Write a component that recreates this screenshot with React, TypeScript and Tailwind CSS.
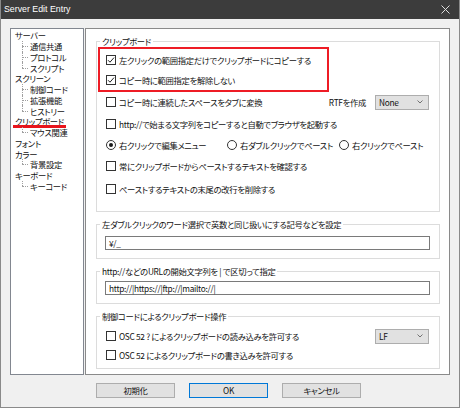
import type { ReactNode } from 'react';

const tree = [
  { label: 'サーバー', children: ['通信共通', 'プロトコル', 'スクリプト'] },
  { label: 'スクリーン', children: ['制御コード', '拡張機能', 'ヒストリー'] },
  { label: 'クリップボード', children: ['マウス関連'], marked: true },
  { label: 'フォント', children: [] },
  { label: 'カラー', children: ['背景設定'] },
  { label: 'キーボード', children: ['キーコード'] },
];

function CheckBox({ checked = false }: { checked?: boolean }) {
  return (
    <span className="flex h-[10px] w-[10px] shrink-0 items-center justify-center border border-[#333] bg-white">
      {checked && (
        <svg width="8" height="8" viewBox="0 0 8 8" fill="none">
          <path d="M1 4.2L3 6.2L7 1.6" stroke="#222" strokeWidth="1" />
        </svg>
      )}
    </span>
  );
}

function Radio({ checked = false }: { checked?: boolean }) {
  return (
    <span className="flex h-[10px] w-[10px] shrink-0 items-center justify-center rounded-full border border-[#333] bg-white">
      {checked && <span className="h-[4px] w-[4px] rounded-full bg-[#1a1a1a]" />}
    </span>
  );
}

function CheckRow({ label, checked, className = '' }: { label: string; checked?: boolean; className?: string }) {
  return (
    <div className={`flex h-[20px] items-center gap-[3px] ${className}`}>
      <CheckBox checked={checked} />
      <span className="whitespace-nowrap">{label}</span>
    </div>
  );
}

function Select({ value }: { value: string }) {
  return (
    <div className="flex h-[15px] w-[54px] items-center justify-between border border-[#adadad] bg-[#e1e1e1] pl-[3px] pr-[5px]">
      <span>{value}</span>
      <svg width="6" height="4" viewBox="0 0 6 4" fill="none">
        <path d="M0.5 0.5L3 3L5.5 0.5" stroke="#555" strokeWidth="0.8" />
      </svg>
    </div>
  );
}

function Group({ title, className = '', children }: { title: string; className?: string; children: ReactNode }) {
  return (
    <div className={`relative border border-[#dcdcdc] ${className}`}>
      <span className="absolute left-[3px] top-[-6px] whitespace-nowrap bg-white px-[2px] leading-[11px]">{title}</span>
      {children}
    </div>
  );
}

function Button({ label, focused = false }: { label: string; focused?: boolean }) {
  return (
    <div
      className={`flex h-[15px] w-[79px] items-center justify-center bg-[#e1e1e1] ${
        focused ? 'border border-[#0078d7]' : 'border border-[#adadad]'
      }`}
    >
      {label}
    </div>
  );
}

export default function App() {
  return (
    <div className="h-[408px] w-[460px] overflow-hidden border-x border-b border-[#8a8a8a] bg-[#f0f0f0] font-['Noto_Sans_CJK_JP','Noto_Sans',sans-serif] text-[8.3px] leading-[11px] tracking-[-0.3px] text-[#111] [font-feature-settings:'palt']">
      <div className="flex h-[19px] items-center justify-between bg-[#3c3c3c] pl-[3px] pr-[9px] tracking-normal text-white">
        <span className="font-['Liberation_Sans',sans-serif] text-[8.8px]">Server Edit Entry</span>
        <svg width="9" height="9" viewBox="0 0 9 9" fill="none">
          <path d="M0.5 0.5L8.5 8.5M8.5 0.5L0.5 8.5" stroke="#ddd" strokeWidth="1" />
        </svg>
      </div>

      <div className="flex gap-[1px] pl-[9px] pt-[9px]">
        <div className="h-[347px] w-[74px] border border-[#828790] bg-white pl-[4px] pt-[1px]">
          {tree.map((node) => (
            <div key={node.label}>
              <div className="flex h-[10.75px] items-center leading-[10px]">
                <span className="relative">
                  {node.label}
                  {node.marked && (
                    <span className="absolute -left-[2px] -right-[2px] bottom-[-2px] h-[3px] bg-[#e8141c]" />
                  )}
                </span>
              </div>
              {node.children.map((child, i) => (
                <div key={child} className="flex h-[10.75px] items-center leading-[10px]">
                  <span className="relative w-[15px] self-stretch">
                    <span
                      className={`absolute left-[7px] top-0 border-l border-dotted border-[#a0a0a0] ${
                        i === node.children.length - 1 ? 'h-1/2' : 'h-full'
                      }`}
                    />
                    <span className="absolute left-[7px] top-1/2 w-[6px] border-t border-dotted border-[#a0a0a0]" />
                  </span>
                  <span>{child}</span>
                </div>
              ))}
            </div>
          ))}
        </div>

        <div className="h-[347px] w-[365px] border border-[#8a8a8a] bg-white pl-[10px] pr-[9px] pt-[12px]">
          <Group title="クリップボード" className="h-[171px]">
            <div className="ml-[1px] mt-[5px] w-[231px] border-2 border-[#ee1c25] pl-[6px] pt-[1px]">
              <CheckRow checked label="左クリックの範囲指定だけでクリップボードにコピーする" />
              <CheckRow checked label="コピー時に範囲指定を解除しない" />
            </div>
            <div className="flex flex-col pl-[9px] pr-[10px]">
              <div className="flex h-[20px] items-center">
                <CheckBox />
                <span className="ml-[3px]">コピー時に連続したスペースをタブに変換</span>
                <span className="ml-auto mr-[9px]">RTFを作成</span>
                <Select value="None" />
              </div>
              <CheckRow className="mt-[2px]" label="http://で始まる文字列をコピーすると自動でブラウザを起動する" />
              <div className="mt-[1px] flex h-[20px] items-center">
                <span className="flex w-[121px] items-center gap-[3px]">
                  <Radio checked />
                  右クリックで編集メニュー
                </span>
                <span className="flex w-[112px] items-center gap-[3px]">
                  <Radio />
                  右ダブルクリックでペースト
                </span>
                <span className="flex items-center gap-[3px]">
                  <Radio />
                  右クリックでペースト
                </span>
              </div>
              <CheckRow className="mt-[1px]" label="常にクリップボードからペーストするテキストを確認する" />
              <CheckRow className="mt-[3px]" label="ペーストするテキストの末尾の改行を削除する" />
            </div>
          </Group>

          <Group title="左ダブルクリックのワード選択で英数と同じ扱いにする記号などを設定" className="mt-[12px] pb-[8px] pl-[8px] pr-[9px] pt-[11px]">
            <div className="flex h-[14px] items-center border border-[#7a7a7a] pl-[3px]">¥/_</div>
          </Group>

          <Group title="http://などのURLの開始文字列を | で区切って指定" className="mt-[12px] pb-[8px] pl-[8px] pr-[9px] pt-[9px]">
            <div className="flex h-[14px] items-center border border-[#7a7a7a] pl-[3px]">http://|https://|ftp://|mailto://|</div>
          </Group>

          <Group title="制御コードによるクリップボード操作" className="mt-[12px] pb-[3px] pl-[9px] pr-[10px] pt-[10px]">
            <div className="flex h-[18px] items-center">
              <CheckBox />
              <span className="ml-[3px]">OSC 52 ? によるクリップボードの読み込みを許可する</span>
              <span className="ml-auto">
                <Select value="LF" />
              </span>
            </div>
            <CheckRow className="h-[18px]" label="OSC 52 によるクリップボードの書き込みを許可する" />
          </Group>
        </div>
      </div>

      <div className="flex gap-[14px] pl-[95px] pt-[8px]">
        <Button label="初期化" />
        <Button label="OK" focused />
        <Button label="キャンセル" />
      </div>
    </div>
  );
}
